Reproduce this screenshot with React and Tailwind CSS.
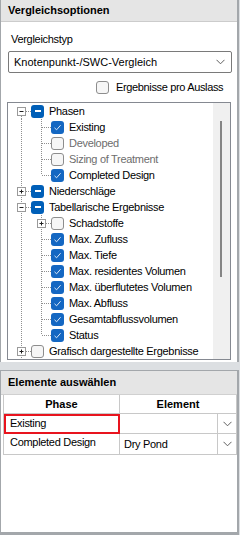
import React from "react";

const FONT = "font-['Liberation_Sans',Arial,sans-serif]";

function Guide({ type, exp }) {
  const d = "1 1";
  const c = "#8f8f8f";
  return (
    <svg width="20" height="16" className="shrink-0 block">
      {type === "line" && <line x1="10.5" y1="0" x2="10.5" y2="16" stroke={c} strokeDasharray={d} />}
      {type === "tee" && <line x1="10.5" y1="0" x2="10.5" y2="16" stroke={c} strokeDasharray={d} />}
      {type === "elbow" && <line x1="10.5" y1="0" x2="10.5" y2="8" stroke={c} strokeDasharray={d} />}
      {type === "first" && <line x1="10.5" y1="9" x2="10.5" y2="16" stroke={c} strokeDasharray={d} />}
      {type !== "line" && <line x1="11" y1="8.5" x2="20" y2="8.5" stroke={c} strokeDasharray={d} />}
      {exp && (
        <g>
          <rect x="6.5" y="4.5" width="8" height="8" fill="#ffffff" stroke="#9a9a9a" />
          <line x1="8.5" y1="8.5" x2="12.5" y2="8.5" stroke="#202020" />
          {exp === "+" && <line x1="10.5" y1="6.5" x2="10.5" y2="10.5" stroke="#202020" />}
        </g>
      )}
    </svg>
  );
}

function CB({ s }) {
  if (s === "ind")
    return (
      <span className="w-[13px] h-[13px] shrink-0 rounded-[3px] bg-[#005fb8] flex items-center justify-center">
        <span className="w-[6px] h-[1.5px] bg-white" />
      </span>
    );
  if (s === "chk")
    return (
      <span className="w-[13px] h-[13px] shrink-0 rounded-[3px] bg-[#1467c2] flex items-center justify-center">
        <svg width="9" height="9" viewBox="0 0 9 9">
          <path d="M1.5 4.8 L3.6 6.8 L7.6 2.2" stroke="#dbe8f7" strokeWidth="1" fill="none" />
        </svg>
      </span>
    );
  return <span className="w-[13px] h-[13px] shrink-0 rounded-[3px] bg-[#f6f6f6] border border-[#8d8d8d] box-border" />;
}

const rows = [
  { g: ["first"], exp: "-", cb: "ind", t: "Phasen" },
  { g: ["line", "tee"], cb: "chk", t: "Existing" },
  { g: ["line", "tee"], cb: "off", dis: true, t: "Developed" },
  { g: ["line", "tee"], cb: "off", dis: true, t: "Sizing of Treatment" },
  { g: ["line", "elbow"], cb: "chk", t: "Completed Design" },
  { g: ["tee"], exp: "+", cb: "ind", t: "Niederschläge" },
  { g: ["tee"], exp: "-", cb: "ind", t: "Tabellarische Ergebnisse" },
  { g: ["line", "tee"], exp: "+", cb: "off", t: "Schadstoffe" },
  { g: ["line", "tee"], cb: "chk", t: "Max. Zufluss" },
  { g: ["line", "tee"], cb: "chk", t: "Max. Tiefe" },
  { g: ["line", "tee"], cb: "chk", t: "Max. residentes Volumen" },
  { g: ["line", "tee"], cb: "chk", t: "Max. überflutetes Volumen" },
  { g: ["line", "tee"], cb: "chk", t: "Max. Abfluss" },
  { g: ["line", "tee"], cb: "chk", t: "Gesamtabflussvolumen" },
  { g: ["line", "elbow"], cb: "chk", t: "Status" },
  { g: ["tee"], exp: "+", cb: "off", t: "Grafisch dargestellte Ergebnisse" },
];

function Chevron() {
  return (
    <svg width="9" height="6" viewBox="0 0 9 6" className="block">
      <path d="M0.5 0.8 L4.5 4.8 L8.5 0.8" stroke="#606060" strokeWidth="1" fill="none" />
    </svg>
  );
}

export default function App() {
  return (
    <div className={`w-[240px] h-[535px] bg-[#dcdfe2] flex flex-col text-[11px] text-black ${FONT}`}>
      {/* Panel 1 */}
      <div className="h-[362px] shrink-0 bg-white border-l border-r-[2px] border-[#a3a7ab] w-[239px] flex flex-col">
        <div className="h-[22px] bg-[#e5e5e5] border-b border-[#cccccc] flex items-center pl-[7px] font-bold text-[11px]">
          Vergleichsoptionen
        </div>
        <div className="pt-[10px] pl-[10px] leading-[14px] tracking-[-0.3px]">Vergleichstyp</div>
        <div className="mt-[5px] ml-[7px] w-[224px] h-[22px] border border-[#7a7a7a] rounded-[2px] flex items-center pl-[5px] pr-[6px] justify-between">
          <span>Knotenpunkt-/SWC-Vergleich</span>
          <Chevron />
        </div>
        <div className="mt-[7px] ml-[95px] h-[14px] flex items-center">
          <span className="w-[13px] h-[13px] rounded-[3px] bg-[#f6f6f6] border border-[#8d8d8d] box-border" />
          <span className="ml-[7px] tracking-[-0.35px]">Ergebnisse pro Auslass</span>
        </div>
        <div className="mt-[8px] ml-[6px] w-[224px] h-[258px] border border-[#858991] flex overflow-hidden">
          <div className="flex-1 flex flex-col pl-[3px] overflow-hidden">
            {rows.map((r, i) => (
              <div key={i} className="h-[16px] shrink-0 flex items-center whitespace-nowrap">
                {r.g.map((g, j) => (
                  <Guide key={j} type={g} exp={j === r.g.length - 1 ? r.exp : undefined} />
                ))}
                <CB s={r.cb} />
                <span className={`ml-[5px] tracking-[-0.3px] leading-[16px] ${r.dis ? "text-[#6d6d6d]" : "text-black"}`}>{r.t}</span>
              </div>
            ))}
          </div>
          <div className="w-[17px] shrink-0 bg-[#f0f0f0] flex flex-col">
            <div className="h-[18px] shrink-0" />
            <div className="ml-[7px] w-[2px] h-[156px] bg-[#858585]" />
          </div>
        </div>
      </div>
      {/* gap */}
      <div className="h-[8px] shrink-0" />
      {/* Panel 2 */}
      <div className="flex-1 bg-white border-l border-r-[2px] border-t border-b-[3px] border-[#a3a7ab] w-[239px] flex flex-col">
        <div className="h-[24px] bg-[#e5e5e5] border-b border-[#d0d0d0] flex items-center pl-[7px] font-bold text-[11px]">
          Elemente auswählen
        </div>
        <div className="ml-[2px] w-[234px] grid grid-cols-[116px_1fr] border-l border-r border-b border-[#c8c8c8]">
          <div className="h-[19px] bg-white border-r border-b border-[#c8c8c8] flex items-center justify-center font-bold">Phase</div>
          <div className="h-[19px] bg-white border-b border-[#c8c8c8] flex items-center justify-center font-bold">Element</div>
          <div className="h-[20px] border-2 border-[#e8141e] flex items-start pl-[4px] leading-[14px] tracking-[-0.3px]">Existing</div>
          <div className="h-[20px] border-b border-[#c8c8c8] flex justify-end">
            <div className="w-[19px] h-full border-l border-[#c8c8c8] flex items-center justify-center"><Chevron /></div>
          </div>
          <div className="h-[20px] border-r border-[#c8c8c8] flex items-start pl-[6px] pt-[1px] leading-[14px] tracking-[-0.3px]">Completed Design</div>
          <div className="h-[20px] flex items-center justify-between pl-[4px]">
            <span className="tracking-[-0.3px]">Dry Pond</span>
            <div className="w-[19px] h-full border-l border-[#c8c8c8] flex items-center justify-center"><Chevron /></div>
          </div>
        </div>
      </div>
    </div>
  );
}
